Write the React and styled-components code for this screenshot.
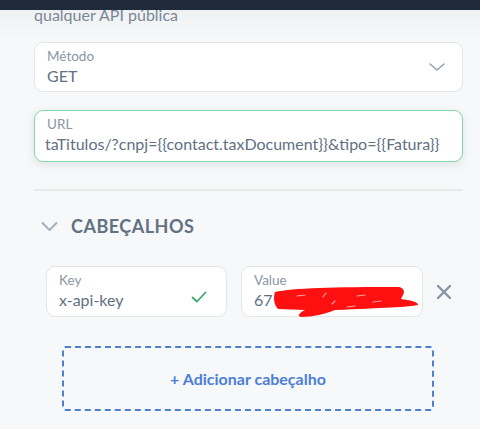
import React from 'react';
import styled, { createGlobalStyle } from 'styled-components';

const GlobalStyle = createGlobalStyle`
  html, body {
    margin: 0;
    padding: 0;
    background: #f6f8f9;
    font-family: Lato, 'Open Sans', sans-serif;
    overflow: hidden;
  }
`;

const TopBar = styled.div`
  position: fixed;
  top: 0;
  left: 0;
  right: 0;
  height: 10px;
  background: #1f2a3b;
  z-index: 2;
`;

const Page = styled.div`
  height: 429px;
  background: linear-gradient(to bottom, #eceff0 0px, #f6f8f9 40px);
  padding: 0 17px 0 34px;
  box-sizing: border-box;
`;

const Description = styled.p`
  margin: 0;
  padding-top: 5px;
  font-size: 16px;
  line-height: 20px;
  color: #7b8796;
`;

const Field = styled.div`
  position: relative;
  box-sizing: border-box;
  margin-top: ${p => p.$top || 0}px;
  width: ${p => p.$width || '100%'};
  height: ${p => p.$height || 50}px;
  background: #fff;
  border: 1px solid ${p => (p.$active ? '#86d6aa' : '#e1e6ea')};
  border-radius: 9px;
  padding: 5px 12px 0 12px;
  box-shadow: ${p => (p.$active ? '0 3px 8px rgba(60, 80, 90, 0.12)' : 'none')};
  overflow: ${p => (p.$clip ? 'hidden' : 'visible')};
`;

const Label = styled.div`
  font-size: 13.5px;
  line-height: 17px;
  color: #8b96a4;
`;

const Value = styled.div`
  font-size: 16px;
  line-height: 22px;
  color: #627083;
  white-space: nowrap;
`;

const Scrolled = styled(Value)`
  margin-left: -2px;
`;

const Chevron = styled.svg`
  position: absolute;
  right: 16px;
  top: 18px;
`;

const Divider = styled.hr`
  margin: 27px 0 0 0;
  border: none;
  border-top: 2px solid #e4ecea;
`;

const SectionHeader = styled.div`
  display: flex;
  align-items: center;
  gap: 13px;
  margin-top: 24px;
  padding-left: 7px;
  font-size: 18px;
  font-weight: 700;
  letter-spacing: 0.5px;
  color: #627184;
`;

const HeaderRow = styled.div`
  display: flex;
  align-items: center;
  gap: 14px;
  margin-top: 29px;
  padding-left: 12px;
`;

const Check = styled.svg`
  position: absolute;
  right: 19px;
  top: 24px;
`;

const Scribble = styled.svg`
  position: absolute;
  left: 31px;
  top: 19px;
`;

const RemoveButton = styled.button`
  display: flex;
  padding: 0;
  margin-left: -1px;
  border: none;
  background: none;
  cursor: pointer;
`;

const AddButton = styled.button`
  display: block;
  box-sizing: border-box;
  margin: 29px 0 0 28px;
  width: 372px;
  height: 65px;
  border: 2px dashed #4f7fd3;
  border-radius: 3px;
  background: transparent;
  font-family: inherit;
  font-size: 16px;
  font-weight: 700;
  color: #4d7fd6;
  cursor: pointer;
`;

export default function App() {
  return (
    <>
      <GlobalStyle />
      <TopBar />
      <Page>
        <Description>qualquer API pública</Description>

        <Field $top={17}>
          <Label>Método</Label>
          <Value>GET</Value>
          <Chevron width="18" height="12" viewBox="0 0 18 12" fill="none">
            <path d="M2 3l7 6 7-6" stroke="#95a2b1" strokeWidth="1.6" strokeLinecap="round" strokeLinejoin="round" />
          </Chevron>
        </Field>

        <Field $top={18} $height={52} $active $clip>
          <Label>URL</Label>
          <Scrolled>taTitulos/?cnpj={'{{'}contact.taxDocument{'}}'}&amp;tipo={'{{'}Fatura{'}}'}</Scrolled>
        </Field>

        <Divider />

        <SectionHeader>
          <svg width="17" height="11" viewBox="0 0 17 11" fill="none">
            <path d="M1.5 2l7 7 7-7" stroke="#a4b0bd" strokeWidth="2" strokeLinecap="round" strokeLinejoin="round" />
          </svg>
          CABEÇALHOS
        </SectionHeader>

        <HeaderRow>
          <Field $width="181px" $height={51}>
            <Label>Key</Label>
            <Value>x-api-key</Value>
            <Check width="16" height="12" viewBox="0 0 16 12" fill="none">
              <path d="M1.5 6.5l4.5 4 8.5-9" stroke="#3aaa6b" strokeWidth="1.8" strokeLinecap="round" strokeLinejoin="round" />
            </Check>
          </Field>
          <Field $width="182px" $height={51}>
            <Label>Value</Label>
            <Value>67</Value>
            <Scribble width="148" height="32" viewBox="0 0 148 32">
              <path
                d="M2 6 C20 2 60 1 126 1 C131 2 132 6 130 9 L128 13 C136 14 146 16 145 19 C136 21 110 22 62 24 C52 28 40 31 28 31 C24 30 26 27 32 24 L5 23 C1 19 0 12 2 6 Z"
                fill="#ff1010"
              />
              <path
                d="M24 10 L32 9 M50 11 L53 7 M62 15 L59 18 M84 10 L92 9 M100 16 L108 15 M74 21 L82 20"
                stroke="#ffffff"
                strokeWidth="1.2"
                strokeLinecap="round"
                opacity="0.6"
              />
            </Scribble>
          </Field>
          <RemoveButton aria-label="Remover">
            <svg width="16" height="16" viewBox="0 0 16 16" fill="none">
              <path d="M2 2l12 12M14 2L2 14" stroke="#8794a3" strokeWidth="2.4" strokeLinecap="round" />
            </svg>
          </RemoveButton>
        </HeaderRow>

        <AddButton>+ Adicionar cabeçalho</AddButton>
      </Page>
    </>
  );
}
